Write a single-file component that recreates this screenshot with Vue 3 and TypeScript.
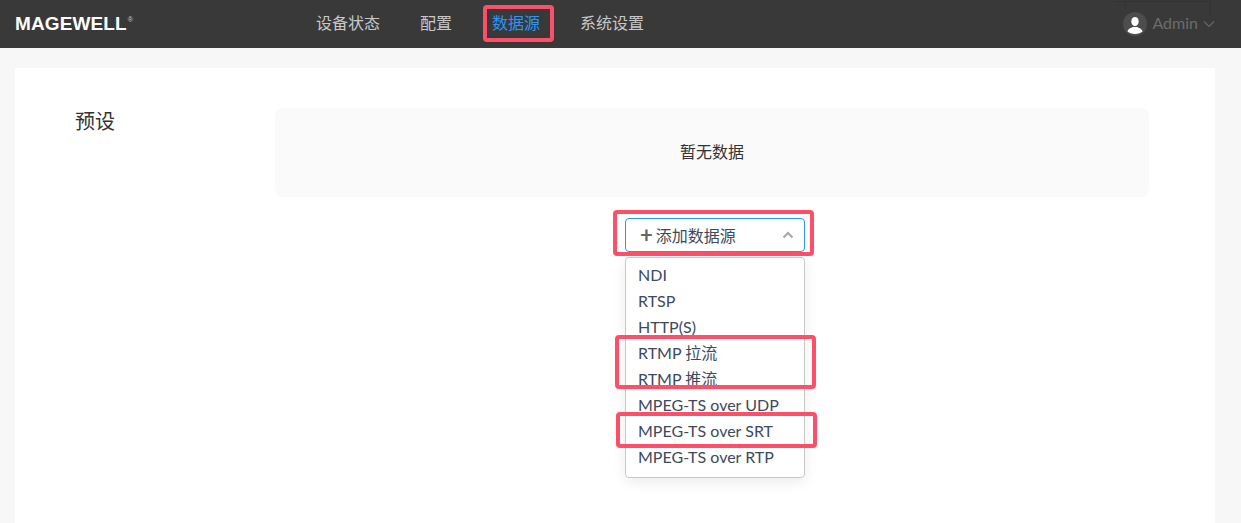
<script setup lang="ts">
const nav = [
  { label: '设备状态', active: false },
  { label: '配置', active: false },
  { label: '数据源', active: true },
  { label: '系统设置', active: false },
]
const options = ['NDI', 'RTSP', 'HTTP(S)', 'RTMP 拉流', 'RTMP 推流', 'MPEG-TS over UDP', 'MPEG-TS over SRT', 'MPEG-TS over RTP']
</script>

<template>
  <div class="page">
    <header class="topbar">
      <div class="logo">MAGEWELL<sup>®</sup></div>
      <nav class="nav">
        <a v-for="n in nav" :key="n.label" class="nav-item" :class="{ active: n.active }">{{ n.label }}</a>
      </nav>
      <div class="user">
        <svg class="deco" width="100" height="16" viewBox="0 0 100 16">
          <path d="M0 .5h97M11 .5v7M96 .5v14" fill="none" stroke="#333" stroke-width="1" />
        </svg>
        <span class="avatar">
          <svg width="24" height="24" viewBox="0 0 24 24">
            <circle cx="12" cy="12" r="12" fill="#4d4d4d" />
            <ellipse cx="12" cy="9.500" rx="3.700" ry="4.600" fill="#fff" />
            <path d="M4.500 19.500c.6-3 3.600-3.600 5.600-4.600h3.800c2 1 5 1.600 5.600 4.600-1.800 1.600-4.300 2.500-7.500 2.500s-5.700-.9-7.500-2.500z" fill="#fff" />
          </svg>
        </span>
        <span class="uname">Admin</span>
        <svg class="caret" width="12" height="8" viewBox="0 0 12 8"><path d="M1 1.500l5 5 5-5" fill="none" stroke="#666" stroke-width="1.200" /></svg>
      </div>
    </header>
    <main class="card">
      <div class="label">预设</div>
      <div class="content">
        <div class="empty">暂无数据</div>
        <div class="select-wrap">
          <button class="select">
            <span class="plus">+</span>
            <span class="sel-text">添加数据源</span>
            <svg class="chev" width="12" height="8" viewBox="0 0 12 8"><path d="M1.500 6.500L6 2l4.500 4.500" fill="none" stroke="#a8a8a8" stroke-width="2.200" /></svg>
          </button>
          <ul class="menu">
            <li v-for="o in options" :key="o">{{ o }}</li>
          </ul>
        </div>
      </div>
    </main>
    <i class="mark m-nav"></i>
    <i class="mark m-btn"></i>
    <i class="mark m-rtmp"></i>
    <i class="mark m-srt"></i>
  </div>
</template>

<style>
html, body { margin: 0; padding: 0; background: #f7f7f7; }
</style>

<style scoped>
.page {
  position: relative;
  height: 523px;
  overflow: hidden;
  background: #f7f7f7;
  font-family: Lato, "Noto Sans CJK SC", sans-serif;
  color: #3c4a5c;
}
.topbar {
  height: 48px;
  background: #393939;
  display: flex;
  align-items: center;
  padding-left: 15px;
  box-sizing: border-box;
}
.logo {
  width: 301px;
  flex: none;
  color: #fff;
  font-family: "Liberation Sans", sans-serif;
  font-weight: 700;
  font-size: 19px;
  letter-spacing: 0.1px;
  line-height: 46px;
  white-space: nowrap;
}
.logo sup {
  font-size: 7px;
  font-weight: 400;
  color: #ccc;
  vertical-align: 8px;
  line-height: 0;
  margin-left: 1px;
}
.nav {
  display: flex;
  gap: 40px;
  font-size: 16px;
  flex: 1;
  padding-bottom: 5px;
}
.nav-item { color: #c8c8c8; white-space: nowrap; }
.nav-item.active { color: #2b96f3; }
.user {
  position: relative;
  display: flex;
  align-items: center;
  margin-right: 26px;
}
.deco { position: absolute; left: -9px; top: -11px; display: block; }
.avatar { display: block; width: 24px; height: 24px; margin-right: 5px; }
.avatar svg { display: block; }
.uname { color: #6c6c6c; font-size: 16px; line-height: 20px; margin: -3px 5px 0 0; }
.caret { display: block; }
.card {
  margin: 20px 26px 0 15px;
  height: 455px;
  background: #fff;
  display: flex;
  padding: 40px 66px 0 60px;
  box-sizing: border-box;
}
.label {
  width: 200px;
  flex: none;
  font-size: 20px;
  line-height: 27px;
  color: #333;
}
.content {
  flex: 1;
  display: flex;
  flex-direction: column;
  align-items: center;
}
.empty {
  width: 100%;
  height: 89px;
  background: #fafafa;
  border-radius: 8px;
  display: flex;
  align-items: center;
  justify-content: center;
  padding-bottom: 4px;
  box-sizing: border-box;
  font-size: 16px;
  color: #333;
}
.select-wrap { width: 180px; margin: 21px 0 0 6px; }
.select {
  width: 100%;
  height: 34px;
  display: flex;
  align-items: center;
  padding: 0 10px 0 14px;
  box-sizing: border-box;
  background: #fff;
  border: 1px solid #2b96f3;
  border-radius: 4px;
  font: inherit;
  font-size: 16px;
  color: #3c4a5c;
}
.plus { font-size: 22px; font-weight: 700; color: #666; line-height: 1; margin-right: 3px; }
.sel-text { flex: 1; text-align: left; }
.chev { display: block; }
.menu {
  list-style: none;
  margin: 5px 0 0;
  padding: 4px 12px 7px;
  height: 221px;
  box-sizing: border-box;
  border: 1px solid #c8c8c8;
  border-radius: 4px;
  background: #fff;
  box-shadow: 0 4px 14px rgba(0, 0, 0, 0.08);
  font-size: 16px;
  line-height: 26px;
}
.menu li { white-space: nowrap; }
.mark {
  position: absolute;
  display: block;
  box-sizing: border-box;
  border: 4px solid #fd5068;
  border-radius: 4px;
  pointer-events: none;
}
.m-nav { left: 483px; top: 5px; width: 71px; height: 37px; }
.m-btn { left: 613px; top: 210px; width: 201px; height: 46px; }
.m-rtmp { left: 615px; top: 335px; width: 201px; height: 54px; }
.m-srt { left: 616px; top: 412px; width: 201px; height: 36px; }
</style>
